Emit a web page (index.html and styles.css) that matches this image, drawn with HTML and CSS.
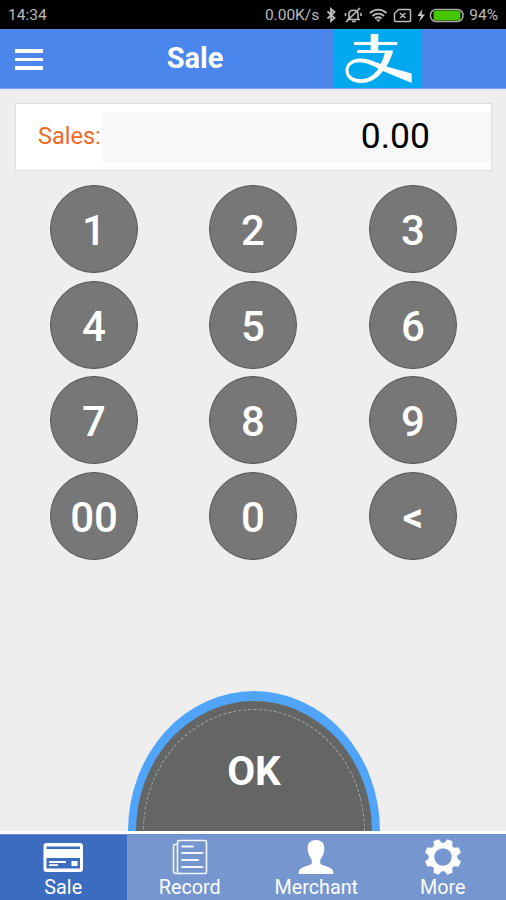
FILE: index.html
```html
<!DOCTYPE html>
<html lang="en">
<head>
  <meta charset="UTF-8" />
  <meta name="viewport" content="width=device-width, initial-scale=1.0" />
  <title>Sale</title>
  <link rel="stylesheet" href="styles.css">
</head>
<body>
  <div class="status-bar">
    <span class="clock">14:34</span>
    <span class="speed">0.00K/s</span>
    <svg class="status-icons" width="141" height="20" viewBox="0 0 141 20" fill="none" stroke="#bbb" stroke-width="1.5">
      <!-- bluetooth -->
      <path d="M1.500 6.500l7 6.500-3.500 3V4l3.500 3-7 6.500" stroke-width="1.800" />
      <!-- muted bell -->
      <path d="M21 14.500h13M23 14V9c0-5 9-5 9 0v5M26 16.500h4M20 17L34 3M19.500 8v3M35 8v3" stroke-width="1.600" />
      <!-- wifi -->
      <path d="M44 8c5-4.500 11.500-4.500 16.500 0M46.500 11c3.500-3 8-3 11.500 0M49 13.500c2-1.500 4.500-1.500 6.500 0" stroke-width="1.900" />
      <path d="M50 14.500h4.500l-2.200 2.500z" fill="#bbb" stroke="none" />
      <!-- no sim -->
      <path d="M72.500 4.500h11q1 0 1 1v10q0 1-1 1h-14q-1 0-1-1V8.500zM74 8l5.500 5M79.500 8L74 13" />
      <!-- charging battery -->
      <path d="M96.500 4L91.500 11h3.500l-2 6 6-7.500h-3.500z" fill="#ccc" stroke="none" />
      <rect x="104.500" y="4.500" width="32.500" height="12" rx="5.500" stroke="#aaa" />
      <rect x="107.500" y="5.500" width="27" height="10" rx="2.500" fill="#45c400" stroke="none" />
    </svg>
    <span class="battery">94%</span>
  </div>

  <header class="header">
    <button class="menu" aria-label="Menu"><i></i><i></i><i></i></button>
    <h1 class="title">Sale</h1>
    <div class="pay-logo">
      <svg width="88" height="59" viewBox="0 0 88 59">
        <path fill="#fff" d="M36.700 5h7.600v8h19v3h-19v5.500h14.900c-1.500 6-4 11.500-6.800 16L77.700 44.500v9.500L49 42c-6 8-13 12-22 12-9.500 0-15.500-5-15.500-12.500 0-7 6-12 14.500-12 8 0 14.500 3 20.500 5.600 2-3.200 3.400-7 4.300-11H23.300v-3h13.400V16H20v-3h16.700zM44.500 39.800C38 36 32 33.200 25.500 33.200c-6.500 0-11 3-11 8 0 5.500 5 9 12.500 9 7.500 0 13-4.500 17.500-10.400z" />
      </svg>
    </div>
  </header>

  <main class="content">
    <div class="amount">
      <label class="amount-label">Sales:</label>
      <div class="amount-value">0.00</div>
    </div>

    <div class="keypad">
      <button class="key">1</button>
      <button class="key">2</button>
      <button class="key">3</button>
      <button class="key">4</button>
      <button class="key">5</button>
      <button class="key">6</button>
      <button class="key">7</button>
      <button class="key">8</button>
      <button class="key">9</button>
      <button class="key">00</button>
      <button class="key">0</button>
      <button class="key back">&lt;</button>
    </div>

    <button class="ok"><span class="ok-face"><span class="ok-ring">OK</span></span></button>
  </main>

  <nav class="tabs">
    <a class="tab active">
      <svg width="40" height="36" viewBox="0 0 40 36">
        <rect x="0.500" y="4" width="39.500" height="29" rx="3" fill="#fff" />
        <path fill="#3c6cc0" d="M3.500 7.500h33.500v2.500H3.500zM3.500 19h33.500v10.500H3.500z" />
        <path fill="#fff" d="M6 22h17v2H6zM6 25.300h9v1.700H6zM28.500 22h6v5h-6z" />
      </svg>
      <span>Sale</span>
    </a>
    <a class="tab">
      <svg width="36" height="36" viewBox="0 0 36 36" fill="none" stroke="#f4f7ff" stroke-width="1.600">
        <rect x="5.500" y="1.500" width="29" height="33" rx="1.500" />
        <path d="M5.500 5.500H3q-1.500 0-1.500 1.500v25q0 2.500 2.500 2.500h5" />
        <path d="M10 7.500h11M10 14h20.500M10 21h16M10 28h20.500" stroke-width="1.900" stroke-linecap="round" />
      </svg>
      <span>Record</span>
    </a>
    <a class="tab">
      <svg width="36" height="36" viewBox="0 0 36 36">
        <path fill="#fff" d="M18 1c6 0 8.700 3.500 8.300 9-.3 5-2 8-4 10.500v4c2 3 13 3 13 8.500v2H.700v-2c0-5.500 11-5.500 13-8.500v-4c-2-2.500-3.700-5.500-4-10.500C9.300 4.500 12 1 18 1z" />
      </svg>
      <span>Merchant</span>
    </a>
    <a class="tab">
      <svg width="36" height="36" viewBox="0 0 36 36">
        <circle cx="18" cy="18" r="11.500" fill="none" stroke="#fff" stroke-width="5.600" />
        <g fill="#fff" transform="rotate(22.5 18 18)">
          <path id="tooth" d="M15.300-.2h5.400l2 5.700h-9.400z" />
          <use href="#tooth" transform="rotate(45 18 18)" />
          <use href="#tooth" transform="rotate(90 18 18)" />
          <use href="#tooth" transform="rotate(135 18 18)" />
          <use href="#tooth" transform="rotate(180 18 18)" />
          <use href="#tooth" transform="rotate(225 18 18)" />
          <use href="#tooth" transform="rotate(270 18 18)" />
          <use href="#tooth" transform="rotate(315 18 18)" />
        </g>
      </svg>
      <span>More</span>
    </a>
  </nav>
</body>
</html>
```

FILE: styles.css
```css
* {
  box-sizing: border-box;
}
body {
  margin: 0;
  height: 900px;
  display: flex;
  flex-direction: column;
  overflow: hidden;
  font-family: Roboto, "Liberation Sans", sans-serif;
  background-color: #eee;
}
button {
  padding: 0;
  border: none;
  font-family: inherit;
}
.status-bar {
  height: 29px;
  display: flex;
  align-items: center;
  padding: 1px 8px 0;
  background-color: #000;
  color: #bbb;
  font-size: 15.5px;
}
.speed {
  margin-left: auto;
}
.status-icons {
  margin: 0 2px 0 7px;
}
.battery {
  font-size: 15.5px;
}
.header {
  height: 60px;
  display: grid;
  grid-template-columns: 57px 277px 88px 1fr;
  align-items: center;
  background-color: #4a86ec;
  border-bottom: 1px solid #7da5ef;
  box-shadow: 0 2px 0 #e4e8f7;
}
.menu {
  display: flex;
  flex-direction: column;
  gap: 5px;
  padding: 2px 0 0 15px;
  background: none;
}
.menu i {
  width: 28px;
  height: 3.5px;
  background-color: #fff;
}
.title {
  margin: 0;
  padding: 0 1px 2px 0;
  text-align: center;
  font-size: 29px;
  font-weight: 700;
  color: #fff;
}
.pay-logo {
  height: 59px;
  background-color: #00a9ef;
}
.pay-logo svg {
  display: block;
}
.content {
  flex: 1;
  display: flex;
  flex-direction: column;
  overflow: hidden;
  padding-top: 14px;
}
.amount {
  display: flex;
  align-items: center;
  flex: none;
  height: 68px;
  margin: 0 14px 0 15px;
  padding-left: 22px;
  background-color: #fff;
  border: 1px solid #ddd;
}
.amount-label {
  width: 64px;
  padding-bottom: 2px;
  font-size: 23.5px;
  color: #f2681f;
}
.amount-value {
  flex: 1;
  height: 50px;
  padding-right: 61px;
  line-height: 49px;
  text-align: right;
  font-size: 35.5px;
  color: #000;
  background-color: #f8f8f8;
}
.keypad {
  display: grid;
  grid-template-columns: 159px 160px 88px;
  row-gap: 7.6px;
  margin: 14px 0 0 50px;
}
.key {
  width: 88px;
  height: 88px;
  border: 1px solid #555;
  border-radius: 50%;
  padding-top: 3px;
  font-size: 42px;
  font-weight: 500;
  color: #fff;
  background-color: #777;
}
.back {
  font-size: 40px;
  font-weight: 700;
}
.ok {
  flex: none;
  align-self: center;
  width: 252px;
  height: 280px;
  margin: 131px 0 0 2px;
  padding: 10px 8px;
  border-radius: 50%;
  background-color: #50a5fa;
}
.ok-face {
  display: block;
  height: 100%;
  padding: 8px 7px;
  border-radius: 50%;
  background-color: #646565;
}
.ok-ring {
  display: block;
  height: 100%;
  padding-top: 37px;
  border: 1px dashed #aaa;
  border-radius: 50%;
  font-size: 40.5px;
  font-weight: 700;
  color: #fff;
}
.tabs {
  height: 69px;
  display: grid;
  grid-template-columns: repeat(4, 1fr);
  border-top: 3px solid #fff;
  background-color: #7596cf;
}
.tab {
  display: flex;
  flex-direction: column;
  align-items: center;
  padding-top: 4px;
  border-top: 1px solid #6a8fd0;
  font-size: 19.8px;
  line-height: 26px;
  color: #fff;
}
.tab svg {
  flex: none;
}
.tab.active {
  background-color: #3c6cc0;
}
```
